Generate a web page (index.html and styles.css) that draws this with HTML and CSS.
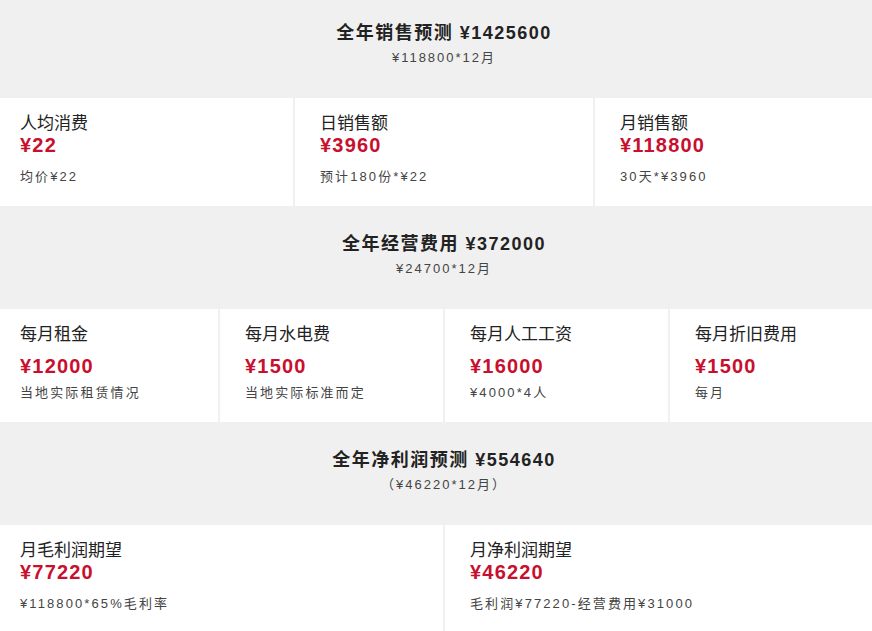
FILE: index.html
```html
<!DOCTYPE html>
<html lang="zh">
<head>
<meta charset="utf-8">
<title>预测</title>
<link rel="stylesheet" href="styles.css">
</head>
<body>
<div class="page">
  <section class="head">
    <div class="head-title">全年销售预测 ¥1425600</div>
    <div class="head-sub">¥118800*12月</div>
  </section>
  <section class="row cols-3">
    <div class="card"><div class="c-title">人均消费</div><div class="c-value">¥22</div><div class="c-sub">均价¥22</div></div>
    <div class="card"><div class="c-title">日销售额</div><div class="c-value">¥3960</div><div class="c-sub">预计180份*¥22</div></div>
    <div class="card"><div class="c-title">月销售额</div><div class="c-value">¥118800</div><div class="c-sub">30天*¥3960</div></div>
  </section>
  <section class="head">
    <div class="head-title">全年经营费用 ¥372000</div>
    <div class="head-sub">¥24700*12月</div>
  </section>
  <section class="row cols-4 tall">
    <div class="card"><div class="c-title">每月租金</div><div class="c-value">¥12000</div><div class="c-sub">当地实际租赁情况</div></div>
    <div class="card"><div class="c-title">每月水电费</div><div class="c-value">¥1500</div><div class="c-sub">当地实际标准而定</div></div>
    <div class="card"><div class="c-title">每月人工工资</div><div class="c-value">¥16000</div><div class="c-sub">¥4000*4人</div></div>
    <div class="card"><div class="c-title">每月折旧费用</div><div class="c-value">¥1500</div><div class="c-sub">每月</div></div>
  </section>
  <section class="head">
    <div class="head-title">全年净利润预测 ¥554640</div>
    <div class="head-sub">（¥46220*12月）</div>
  </section>
  <section class="row cols-2">
    <div class="card"><div class="c-title">月毛利润期望</div><div class="c-value">¥77220</div><div class="c-sub">¥118800*65%毛利率</div></div>
    <div class="card"><div class="c-title">月净利润期望</div><div class="c-value">¥46220</div><div class="c-sub">毛利润¥77220-经营费用¥31000</div></div>
  </section>
</div>
</body>
</html>
```

FILE: styles.css
```css
html, body {
  margin: 0;
  padding: 0;
  background: #f0f0f0;
  overflow: hidden;
}
body {
  font-family: "Liberation Sans", Arial, "Noto Sans CJK SC", sans-serif;
  color: #333;
}
.page {
  width: 898px;
  margin: -5px 0 0 -5px;
  background: #f0f0f0;
}
.head {
  height: 103px;
  box-sizing: border-box;
  padding-top: 27px;
  text-align: center;
}
.head-title {
  font-size: 18px;
  line-height: 22px;
  font-weight: bold;
  letter-spacing: 1.5px;
  color: #222;
}
.head-sub {
  margin-top: 4px;
  font-size: 13px;
  line-height: 20px;
  letter-spacing: 2px;
  color: #444;
}
.row {
  display: grid;
  gap: 2px;
}
.cols-2 { grid-template-columns: repeat(2, 1fr); }
.cols-3 { grid-template-columns: repeat(3, 1fr); }
.cols-4 { grid-template-columns: repeat(4, 1fr); }
.card {
  background: #fff;
  box-sizing: border-box;
  height: 108px;
  padding: 17px 10px 0 25px;
}
.c-title {
  font-size: 17px;
  line-height: 18px;
  color: #222;
}
.c-value {
  font-size: 20px;
  line-height: 24px;
  font-weight: bold;
  letter-spacing: 1.2px;
  color: #c8102e;
}
.c-sub {
  margin-top: 10px;
  font-size: 13px;
  line-height: 20px;
  letter-spacing: 2.1px;
  color: #444;
}
.tall .card { height: 113px; }
.tall .c-value { margin-top: 10px; }
.tall .c-sub { margin-top: 5px; }
```
